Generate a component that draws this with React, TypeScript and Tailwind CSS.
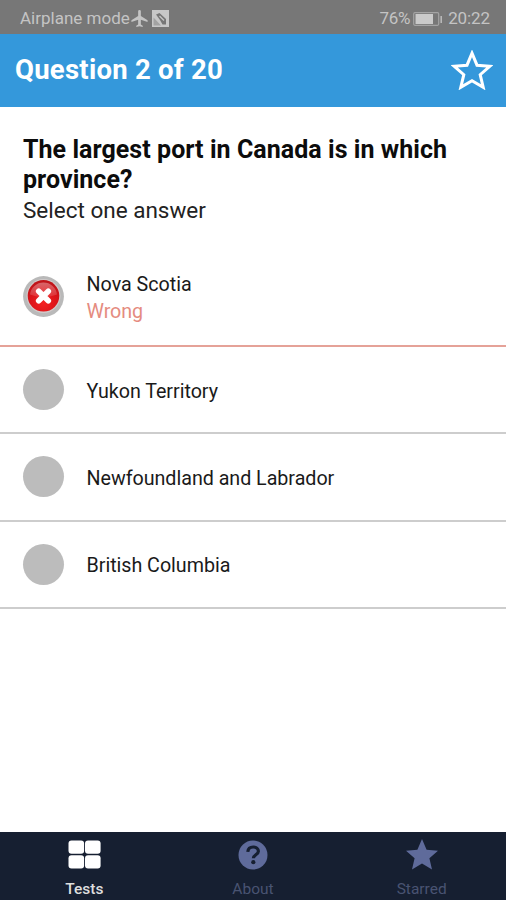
// Quiz screen: status bar, question, answer list, bottom tabs

// ─── Types & data ────────────────────────────────────────────────────────────
interface Answer {
  id: number
  label: string
  wrong?: boolean
}

const ANSWERS: Answer[] = [
  { id: 1, label: "Nova Scotia", wrong: true },
  { id: 2, label: "Yukon Territory" },
  { id: 3, label: "Newfoundland and Labrador" },
  { id: 4, label: "British Columbia" },
]

// ─── Icons ───────────────────────────────────────────────────────────────────
function AirplaneIcon() {
  return (
    <svg width="17" height="17" viewBox="2 2 20 20" fill="currentColor">
      <path d="M21.5 16v-2L13.6 9V3.6a1.6 1.6 0 0 0-3.2 0V9l-7.9 5v2l7.9-2.4V19l-2.2 1.5V22l3.8-1 3.8 1v-1.5L13.6 19v-5.4z" />
    </svg>
  )
}

function NoSimIcon() {
  return (
    <svg width="17" height="17" viewBox="0 0 17 17">
      <rect width="17" height="17" fill="#c8c8c8" />
      <path d="M4 4.500 7.500 3 14 9v5.500h-3.500L8 10z" fill="#777" />
      <path d="M7.500 6 12 10.500" stroke="#c8c8c8" strokeWidth="1.200" />
      <path d="M1.500 7.500 9 15.500H1.500z" fill="#a3a3a3" />
    </svg>
  )
}

function BatteryIcon() {
  return (
    <svg width="30" height="14" viewBox="0 0 30 14">
      <rect x="0.7" y="0.7" width="25" height="12.6" rx="1.2" fill="none" stroke="#a4a4a4" strokeWidth="1.2" />
      <rect x="2.5" y="2" width="17.5" height="10" fill="#cacaca" />
      <rect x="27.4" y="4" width="1.6" height="7" fill="#b8b8b8" />
    </svg>
  )
}

function WrongBadge() {
  return (
    <svg width="41" height="41" viewBox="0 0 41 41">
      <defs>
        <radialGradient id="wrong-red" cx="50%" cy="72%" r="65%">
          <stop offset="0%" stopColor="#f42020" />
          <stop offset="65%" stopColor="#db1319" />
          <stop offset="100%" stopColor="#c0151a" />
        </radialGradient>
        <linearGradient id="wrong-gloss" x1="0" y1="0" x2="0" y2="1">
          <stop offset="0%" stopColor="#fff" stopOpacity="0.35" />
          <stop offset="100%" stopColor="#fff" stopOpacity="0.12" />
        </linearGradient>
      </defs>
      <circle cx="20.5" cy="20.5" r="20.4" fill="#b9b9b9" />
      <circle cx="20.5" cy="20" r="17" fill="#d0caca" />
      <circle cx="20.5" cy="19.8" r="15.8" fill="url(#wrong-red)" />
      <path d="M7 18.5a13.6 13.6 0 0 1 27 0q-13.500 5-27 0z" fill="url(#wrong-gloss)" />
      <path d="M15.700 15.200 25.300 24.800M25.300 15.200 15.700 24.800" stroke="#fff" strokeWidth="5.600" strokeLinecap="round" />
    </svg>
  )
}

function StarIcon() {
  return (
    <svg width="42" height="40" viewBox="0 0 42 40" fill="none" stroke="#fff" strokeWidth="3">
      <path d="M21 3.200 26 15.200 39 16.200 29.200 24.700 32.200 37.300 21 30.700 9.800 37.300 12.800 24.700 3 16.200 16 15.200z" />
    </svg>
  )
}

function TestsIcon() {
  return (
    <svg width="33" height="29" viewBox="0 0 33 29" fill="#fff">
      <rect x="0.500" y="0.500" width="15.600" height="13.300" rx="3" />
      <rect x="17" y="0.500" width="15.600" height="13.300" rx="3" />
      <rect x="0.500" y="15.200" width="15.600" height="13.300" rx="3" />
      <rect x="17" y="15.200" width="15.600" height="13.300" rx="3" />
    </svg>
  )
}

function AboutIcon() {
  return (
    <svg width="30" height="30" viewBox="0 0 30 30">
      <circle cx="15" cy="15" r="14.500" fill="#5f6b9b" />
      <path d="M9.800 11.800c.3-3.200 2.500-4.800 5.400-4.800 3 0 5.200 1.600 5.200 4.300 0 3.500-5 3.500-5 6.900" fill="none" stroke="#161f31" strokeWidth="3.200" />
      <circle cx="15.300" cy="22.200" r="2.100" fill="#161f31" />
    </svg>
  )
}

function StarredIcon() {
  return (
    <svg width="32" height="31" viewBox="0 0 32 31" fill="#5f6b9b">
      <path d="M16 0 20.600 10.700 32 11.700 23.400 19.300 26 30.500 16 24.600 6 30.500 8.600 19.300 0 11.700 11.400 10.700z" />
    </svg>
  )
}

const TABS = [
  { label: "Tests", icon: <TestsIcon />, active: true },
  { label: "About", icon: <AboutIcon />, active: false },
  { label: "Starred", icon: <StarredIcon />, active: false },
]

// ─── Answer row ──────────────────────────────────────────────────────────────
function AnswerRow({ answer }: { answer: Answer }) {
  if (answer.wrong) {
    return (
      <li className="flex h-[99px] items-center gap-[22.500px] border-b-2 border-[#e5a298] pl-[23px]">
        <WrongBadge />
        <div className="pt-[2px] text-[19.700px] leading-[27px]">
          <p className="text-[#1a1a1a]">{answer.label}</p>
          <p className="tracking-[-0.1px] text-[#e58b80]">Wrong</p>
        </div>
      </li>
    )
  }
  return (
    <li className="flex h-[87.250px] items-center gap-[22.500px] border-b-2 border-[#cdcdcd] pl-[23px]">
      <span className="size-[41px] rounded-full bg-[#bcbcbc]" />
      <span className="pt-[3px] text-[19.700px] leading-[27px] tracking-[-0.030px] text-[#1a1a1a]">{answer.label}</span>
    </li>
  )
}

export default function App() {
  return (
    <div className="flex h-[900px] w-[506px] flex-col overflow-hidden bg-white font-['Roboto',sans-serif]">
      {/* ── Status bar ── */}
      <div className="flex h-[34px] shrink-0 items-center justify-between bg-[#777] pt-[3px] pr-[16px] pl-[20px] text-[17px] text-[#c4c4c4]">
        <div className="flex items-center">
          <span>Airplane mode</span>
          <span className="ml-[1px]"><AirplaneIcon /></span>
          <span className="ml-[4px]"><NoSimIcon /></span>
        </div>
        <div className="flex items-center">
          <span className="tracking-[-0.3px]">76%</span>
          <span className="ml-[3px]"><BatteryIcon /></span>
          <span className="ml-[5px] tracking-[-0.1px]">20:22</span>
        </div>
      </div>

      {/* ── Header ── */}
      <header className="flex h-[73px] shrink-0 items-center justify-between bg-[#3498db] pr-[13px] pl-[15px]">
        <h1 className="pb-[2px] text-[27.500px] font-bold tracking-[0.250px] text-white">Question 2 of 20</h1>
        <span className="pb-[2px]"><StarIcon /></span>
      </header>

      {/* ── Question ── */}
      <main className="flex-1">
        <div className="h-[139px] pt-[28px] pl-[23px]">
          <h2 className="w-[450px] text-[25px] leading-[29.500px] font-bold tracking-[0.050px] text-[#0c0c0c]">
            The largest port in Canada is in which province?
          </h2>
          <p className="mt-[2px] text-[22.500px] leading-[28px] text-[#222]">Select one answer</p>
        </div>
        <ul className="pt-[2px]">
          {ANSWERS.map((a) => <AnswerRow key={a.id} answer={a} />)}
        </ul>
      </main>

      {/* ── Bottom tabs ── */}
      <nav className="grid h-[68px] shrink-0 grid-cols-3 bg-[#161f31]">
        {TABS.map((t) => (
          <div key={t.label} className="flex flex-col items-center">
            <div className="flex h-[45px] items-center">{t.icon}</div>
            <span className={`pt-[2px] text-[15.500px] leading-[21px] ${t.active ? "font-medium text-[#dedede]" : "text-[#495371]"}`}>{t.label}</span>
          </div>
        ))}
      </nav>
    </div>
  )
}
